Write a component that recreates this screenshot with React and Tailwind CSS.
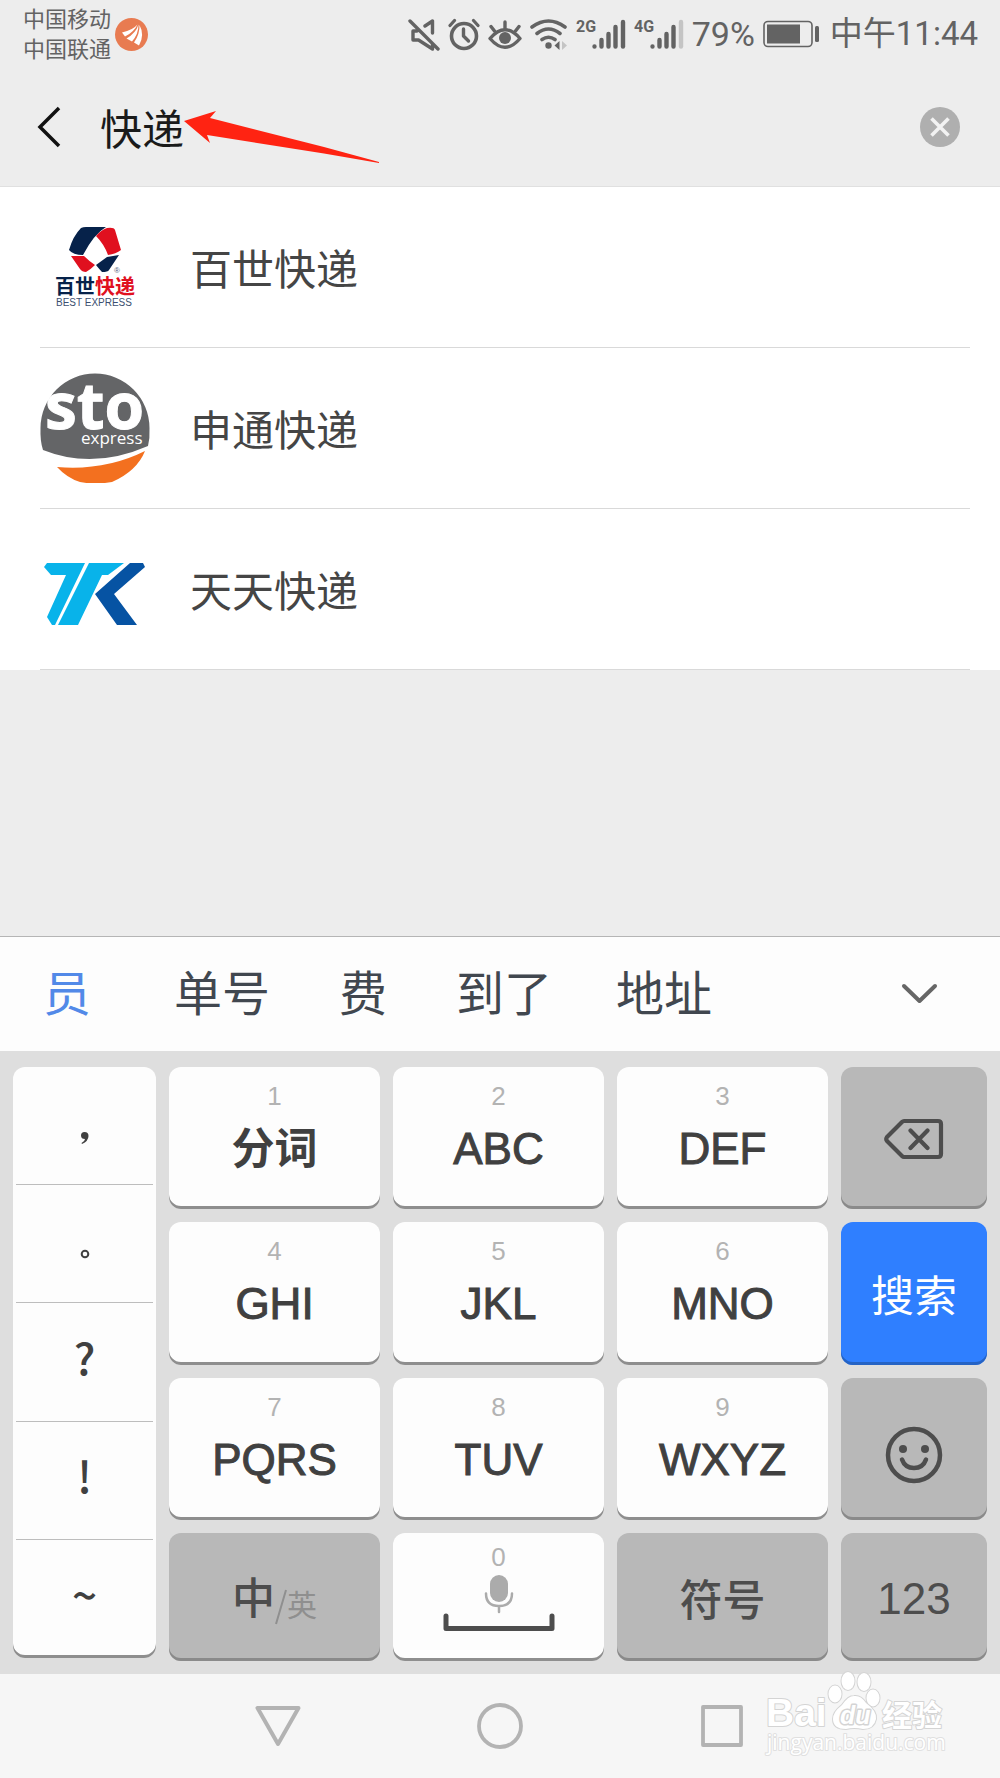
import React, { useState } from "react";

const CJK = "font-['Noto_Sans_CJK_SC',sans-serif]";

function MuteIcon() {
  return (
    <svg width="32" height="34" viewBox="0 0 32 34" fill="none" stroke="#636363" strokeWidth="3.400" strokeLinecap="round" strokeLinejoin="round" aria-label="静音">
      <path d="M2 4 30 32M17 9 24.500 4v12M9 14H5v9h5.500l14 9v-5" />
    </svg>
  );
}

function AlarmIcon() {
  return (
    <svg width="32" height="34" viewBox="0 0 32 34" fill="none" stroke="#636363" strokeLinecap="round" aria-label="闹钟">
      <circle cx="16" cy="19" r="12.500" strokeWidth="3.600" />
      <path d="M15.500 12v7l5 5" strokeWidth="3.400" strokeLinejoin="round" />
      <path d="M2 8.500 6.500 3.500M30 8.500 25.500 3.500" strokeWidth="3.200" />
    </svg>
  );
}

function EyeIcon() {
  return (
    <svg width="34" height="34" viewBox="0 0 34 34" fill="none" stroke="#636363" strokeWidth="3.400" strokeLinecap="round" aria-label="护眼">
      <path d="M2 21.500Q17 4 32 21.500Q17 39 2 21.500Z" strokeLinejoin="round" />
      <circle cx="17" cy="21" r="6" fill="#636363" stroke="none" />
      <path d="M17 5v6M3 9.500l3.500 4.500M31 9.500l-3.500 4.500" />
    </svg>
  );
}

function WifiIcon() {
  return (
    <svg width="38" height="34" viewBox="0 0 38 34" fill="none" stroke="#636363" strokeWidth="3.600" strokeLinecap="round" aria-label="无线网络">
      <path d="M2 10Q18.500-2 35 10M7 16.500Q18.500 7.500 30 16.500M12 22.500Q18.500 18 25 22.500" />
      <circle cx="18.500" cy="28.500" r="3.200" fill="#636363" stroke="none" />
      <path d="M29.500 24v9l-5-4.500Z" fill="#636363" stroke="none" />
      <path d="M32 24v9l5-4.500Z" fill="#c4c4c4" stroke="none" />
    </svg>
  );
}

function Signal({ label, weak }) {
  return (
    <svg width="50" height="34" viewBox="0 0 50 34" aria-label={label + " 信号"}>
      <text x="0" y="15" fill="#636363" className="font-['Roboto',sans-serif] text-[16px] font-bold">{label}</text>
      <g stroke="#636363" strokeWidth="4.400" strokeLinecap="round">
        <path d="M18.500 29.500v.100M25.500 23V29.500M32.500 17V29.500M39.500 10V29.500" />
        <path d="M47 5V29.500" stroke={weak ? "#c4c4c4" : "#636363"} />
      </g>
    </svg>
  );
}

function StatusBar() {
  return (
    <div className="flex items-center justify-between pt-[2px] pr-[22px] pb-[2px] pl-[23px] text-[#636363]">
      <div className="flex items-center gap-1">
        <div className={CJK + " text-[22px] leading-[30px]"}>
          <div>中国移动</div>
          <div>中国联通</div>
        </div>
        <svg className="mt-1" width="33" height="33" viewBox="0 0 33 33" aria-hidden="true">
          <circle cx="16.500" cy="16.500" r="16.500" fill="#e87b51" />
          <path d="M7 14.500Q18 12 22.500 6.500Q19 14 10 18.500ZM11.500 20.500Q21 15 23.500 6.500Q23.500 16 17 23.500ZM19 24.500Q25 16 24.500 7Q30 17 24 27.500Z" fill="#fff" />
        </svg>
      </div>
      <div className="flex items-center gap-2 pt-1">
        <MuteIcon />
        <AlarmIcon />
        <EyeIcon />
        <WifiIcon />
        <Signal label="2G" />
        <Signal label="4G" weak />
        <span className="font-['Roboto',sans-serif] text-[34px] leading-[40px]">79%</span>
        <svg width="57" height="28" viewBox="0 0 57 28" aria-label="电量">
          <rect x="1" y="1.500" width="48" height="25" rx="4" fill="none" stroke="#636363" strokeWidth="1.600" />
          <rect x="4" y="4.500" width="33" height="19" fill="#636363" />
          <rect x="52" y="6" width="4" height="16" rx="1.500" fill="#636363" />
        </svg>
        <span className="ml-[2px] font-['Roboto','Noto_Sans_CJK_SC',sans-serif] text-[33px] leading-[40px]">中午11:44</span>
      </div>
    </div>
  );
}

function SearchHeader() {
  const [query, setQuery] = useState("快递");
  return (
    <form className="relative flex h-[120px] items-center border-b border-[#e0e0e0] pr-10 pl-9" onSubmit={(e) => e.preventDefault()}>
      <button type="button" aria-label="返回" className="shrink-0">
        <svg width="26" height="44" viewBox="0 0 26 44" fill="none" stroke="#111" strokeWidth="3.500">
          <path d="M23 3 4 22 23 41" />
        </svg>
      </button>
      <input
        aria-label="搜索"
        value={query}
        onChange={(e) => setQuery(e.target.value)}
        className={CJK + " ml-[38px] h-16 min-w-0 flex-1 bg-transparent text-[42px] leading-[60px] text-[#1a1a1a] outline-none"}
      />
      <button type="button" aria-label="清除" onClick={() => setQuery("")} className="shrink-0">
        <svg width="40" height="40" viewBox="0 0 40 40">
          <circle cx="20" cy="20" r="20" fill="#afafaf" />
          <path d="M11.500 11.500 28.500 28.500M28.500 11.500 11.500 28.500" stroke="#f2f2f2" strokeWidth="3.600" />
        </svg>
      </button>
      <svg className="pointer-events-none absolute top-11 left-[184px]" width="196" height="54" viewBox="0 0 196 54" aria-hidden="true">
        <path d="M0 10 32 0 26 7L140 36 195 51V52L140 42.500 23 24L26 32Z" fill="#ff2312" />
      </svg>
    </form>
  );
}

function BestLogo() {
  return (
    <svg width="110" height="110" viewBox="0 0 110 110" aria-label="百世快递">
      <path d="M41 16Q43 15 46 15H66Q54 22 43 43Q33 43 29 38Q33 24 41 16Z" fill="#06224a" />
      <path d="M56 24Q61 18 67 16Q74 15 75 18L81 38Q76 42 68 43Q64 32 56 24Z" fill="#e0101f" />
      <path d="M31 44H44Q49 49 55 53Q50 58 46 60Q42 60 40 57Z" fill="#e0101f" />
      <path d="M79 43Q73 44 67 45L56 53Q60 58 62 60Q68 60 69 58Z" fill="#06224a" />
      <text x="74" y="61" fill="#55607c" className="font-['Liberation_Sans',sans-serif] text-[8px]">®</text>
      <text x="15" y="82" className={CJK + " text-[20px] font-bold"}>
        <tspan fill="#06224a">百世</tspan>
        <tspan fill="#e0101f">快递</tspan>
      </text>
      <text x="16" y="94" fill="#3c4f70" className="font-['Liberation_Sans',sans-serif] text-[10px]">BEST EXPRESS</text>
    </svg>
  );
}

function StoLogo() {
  return (
    <svg width="110" height="110" viewBox="0 0 110 110" aria-label="申通快递">
      <path d="M3 77Q0 68 0.500 55A54.500 54.500 0 0 1 109.500 55Q110 65 108 73Q53 97 3 77Z" fill="#646567" />
      <path d="M17 94Q65 98 105 78Q97 98 72 109Q55 112 40 109Q27 105 17 94Z" fill="#f3701f" />
      <text x="5" y="56" fill="#fff" stroke="#fff" strokeWidth="1" className="font-['Open_Sans',sans-serif] text-[64px] font-bold">sto</text>
      <text x="41" y="71" fill="#fff" className="font-['Open_Sans',sans-serif] text-[17px] font-medium">express</text>
    </svg>
  );
}

function TtkLogo() {
  return (
    <svg width="110" height="110" viewBox="0 0 110 110" aria-label="天天快递">
      <path d="M7 29H45L15 91H12L7 83 26 41H11L4 33Z" fill="#08b3ea" />
      <path d="M49 29H84L68 41H62L38 91H18Z" fill="#08b3ea" />
      <path d="M90 29H103L105 33 74 60 97 91H77L55 60Z" fill="#0653a3" />
    </svg>
  );
}

const COMPANIES = [
  { name: "百世快递", Logo: BestLogo },
  { name: "申通快递", Logo: StoLogo },
  { name: "天天快递", Logo: TtkLogo },
];

function Results() {
  return (
    <ul className="bg-white pr-[30px] pl-10">
      {COMPANIES.map(({ name, Logo }) => (
        <li key={name} className="border-b border-[#d9d9d9]">
          <button type="button" className="flex h-40 w-full items-center gap-10 text-left">
            <Logo />
            <span className={CJK + " text-[42px] leading-[60px] text-[#454545]"}>{name}</span>
          </button>
        </li>
      ))}
    </ul>
  );
}

function Candidates() {
  return (
    <div className="flex h-[115px] items-center justify-between border-t border-[#b5b5b5] bg-[#fdfdfd] pr-[62px]">
      <div className={CJK + " flex pb-2 text-[48px] leading-[64px] text-[#41474f]"}>
        <button type="button" className="w-[142px] pr-2 text-[#5289e8]">员</button>
        {["单号", "费", "到了", "地址"].map((w) => (
          <button type="button" key={w} className="min-w-[122px] px-8">{w}</button>
        ))}
      </div>
      <button type="button" aria-label="展开">
        <svg width="37" height="22" viewBox="0 0 37 22" fill="none" stroke="#666" strokeWidth="4" strokeLinecap="round" strokeLinejoin="round">
          <path d="M3 3 18.500 18 34 3" />
        </svg>
      </button>
    </div>
  );
}

function LetterKey({ digit, label, cjk }) {
  return (
    <button type="button" className="flex flex-col items-center rounded-xl bg-[#fdfdfd] pt-3 text-[#404040] shadow-[inset_0_-3px_0_#8e8e8e]">
      <span className="font-['Liberation_Sans',sans-serif] text-[26px] leading-[34px] text-[#b3b3b3]">{digit}</span>
      {cjk ? (
        <span className={CJK + " mt-[2px] text-[43px] leading-[60px] font-bold"}>{label}</span>
      ) : (
        <span className="mt-1 font-['Liberation_Sans',sans-serif] text-[44px] leading-[64px] [-webkit-text-stroke:1px_#404040]">{label}</span>
      )}
    </button>
  );
}

function GreyKey({ children, label }) {
  return (
    <button type="button" aria-label={label} className="flex items-center justify-center rounded-xl bg-[#b8b8b8] text-[#4d4d4d] shadow-[inset_0_-3px_0_#8a8a8a]">
      {children}
    </button>
  );
}

function Comma() {
  return (
    <svg width="10" height="14" viewBox="0 0 10 14" aria-label="逗号">
      <path d="M1 4.500Q1 1 4.500 1Q8.500 1 8.500 5Q8.500 10 2 13L1.500 12Q5 10 5 8Q1 8 1 4.500Z" fill="#404040" />
    </svg>
  );
}

function FullStop() {
  return (
    <svg width="10" height="10" viewBox="0 0 10 10" aria-label="句号">
      <circle cx="5" cy="5" r="3.300" fill="none" stroke="#404040" strokeWidth="2" />
    </svg>
  );
}

const PUNCTUATION = [
  { id: "comma", mark: <Comma />, pad: "pt-6" },
  { id: "stop", mark: <FullStop />, pad: "pt-5" },
  { id: "question", mark: "?", pad: "pb-3" },
  { id: "exclamation", mark: "!", pad: "pb-3" },
  { id: "tilde", mark: "~", pad: "pb-3" },
];

function Keyboard() {
  return (
    <div className="grid grid-cols-[143fr_211fr_211fr_211fr_146fr] grid-rows-[142px_143px_142px_128px] gap-[13px] bg-[#dedede] px-[13px] pt-4 pb-[13px]">
      <div className="row-span-4 mb-[3px] grid grid-rows-5 divide-y divide-[#bdbdbd] rounded-xl bg-[#fdfdfd] px-[3px] shadow-[inset_0_-3px_0_#8e8e8e]">
        {PUNCTUATION.map(({ id, mark, pad }) => (
          <button type="button" key={id} className={CJK + " flex min-h-0 items-center justify-center text-[44px] leading-[60px] font-medium text-[#404040] " + pad}>
            {mark}
          </button>
        ))}
      </div>

      <LetterKey digit="1" label="分词" cjk />
      <LetterKey digit="2" label="ABC" />
      <LetterKey digit="3" label="DEF" />
      <GreyKey label="删除">
        <svg className="mt-[2px]" width="60" height="42" viewBox="0 0 60 42" fill="none" stroke="#4d4d4d" strokeWidth="4.200" strokeLinecap="round" strokeLinejoin="round">
          <path d="M20 3H54Q57 3 57 6V36Q57 39 54 39H20Q19 39 18 38L3 23Q1.500 21 3 19L18 4Q19 3 20 3ZM26.500 12.500 43.500 30M43.500 12.500 26.500 30" />
        </svg>
      </GreyKey>

      <LetterKey digit="4" label="GHI" />
      <LetterKey digit="5" label="JKL" />
      <LetterKey digit="6" label="MNO" />
      <button type="submit" className={CJK + " rounded-xl bg-[#2f7fff] pb-[2px] text-[43px] leading-[60px] text-white shadow-[inset_0_-3px_0_#2563c4]"}>搜索</button>

      <LetterKey digit="7" label="PQRS" />
      <LetterKey digit="8" label="TUV" />
      <LetterKey digit="9" label="WXYZ" />
      <GreyKey label="表情">
        <svg className="mt-3" width="58" height="58" viewBox="0 0 58 58" fill="none" stroke="#4d4d4d" strokeWidth="4.500" strokeLinecap="round">
          <circle cx="29" cy="29" r="26" />
          <path d="M17 33.500Q20 42 29 42Q38 42 41 33.500" />
          <circle cx="18" cy="23" r="4" fill="#4d4d4d" stroke="none" />
          <circle cx="40" cy="23" r="4" fill="#4d4d4d" stroke="none" />
        </svg>
      </GreyKey>

      <GreyKey label="中/英">
        <span className={CJK + " flex items-end pb-1 text-[#8f8f8f]"}>
          <span className="text-[43px] leading-[60px] font-medium text-[#4d4d4d]">中</span>
          <svg width="12" height="36" viewBox="0 0 12 36" fill="none" stroke="#8f8f8f" strokeWidth="2">
            <path d="M11 1 1 35" />
          </svg>
          <span className="text-[30px] leading-[44px]">英</span>
        </span>
      </GreyKey>
      <button type="button" aria-label="空格" className="flex flex-col items-center rounded-xl bg-[#fdfdfd] pt-2 shadow-[inset_0_-3px_0_#8e8e8e]">
        <span className="font-['Liberation_Sans',sans-serif] text-[26px] leading-[32px] text-[#b3b3b3]">0</span>
        <svg width="112" height="58" viewBox="0 0 112 58" fill="none" strokeLinecap="round" strokeLinejoin="round">
          <rect x="47" y="2" width="18" height="27" rx="9" fill="#ababab" />
          <path d="M43 20.500Q43 33 56 33Q69 33 69 20.500M56 33V39" stroke="#ababab" strokeWidth="2.500" />
          <path d="M3 43V55.500H109V43" stroke="#4d4d4d" strokeWidth="5" />
        </svg>
      </button>
      <GreyKey>
        <span className={CJK + " text-[43px] leading-[60px] font-medium"}>符号</span>
      </GreyKey>
      <GreyKey>
        <span className="pt-1 font-['Liberation_Sans',sans-serif] text-[44px] leading-[60px]">123</span>
      </GreyKey>
    </div>
  );
}

function Watermark() {
  return (
    <svg className="pointer-events-none absolute right-[50px] bottom-5" width="186" height="88" viewBox="0 0 186 88" aria-label="Baidu 经验">
      <g fill="#fff" stroke="#d4d4d4" strokeWidth="2" paintOrder="stroke" strokeLinejoin="round">
        <text x="2" y="56" className="font-['Liberation_Sans',sans-serif] text-[39px] font-bold">Bai</text>
        <ellipse cx="71" cy="24" rx="6.500" ry="8.500" />
        <ellipse cx="84" cy="11" rx="6.500" ry="9" />
        <ellipse cx="100" cy="12" rx="6.500" ry="9" />
        <ellipse cx="109" cy="28" rx="6.500" ry="8.500" />
        <path d="M90 26Q97 25 102 33Q113 41 112 49Q110 59 99 59Q90 57 82 59Q69 59 69 49Q69 42 78 35Q84 26 90 26Z" />
        <text x="76" y="54" strokeWidth="3" className="font-['Liberation_Sans',sans-serif] text-[25px] font-bold italic">du</text>
        <text x="118" y="56" className={CJK + " text-[30px] font-bold"}>经验</text>
        <text x="3" y="80" stroke="#e0e0e0" className="font-['Open_Sans',sans-serif] text-[21px]">jingyan.baidu.com</text>
      </g>
    </svg>
  );
}

function NavBar() {
  return (
    <nav className="relative flex h-[104px] items-center justify-center gap-[176px] bg-[#f6f6f6]">
      <button type="button" aria-label="返回">
        <svg width="46" height="46" viewBox="0 0 46 46" fill="none" stroke="#b3b3b3" strokeWidth="4" strokeLinejoin="round">
          <path d="M2.500 5H43.500L23 41Z" />
        </svg>
      </button>
      <button type="button" aria-label="主页">
        <svg width="46" height="46" viewBox="0 0 46 46" fill="none" stroke="#b3b3b3" strokeWidth="3.800">
          <circle cx="23" cy="23" r="21" />
        </svg>
      </button>
      <button type="button" aria-label="最近任务">
        <svg width="46" height="46" viewBox="0 0 46 46" fill="none" stroke="#b3b3b3" strokeWidth="3.800" strokeLinejoin="round">
          <rect x="4" y="4" width="38" height="38" />
        </svg>
      </button>
      <Watermark />
    </nav>
  );
}

export default function App() {
  return (
    <div className="flex min-h-screen flex-col bg-[#ededed]">
      <header className="flex flex-col gap-[3px]">
        <StatusBar />
        <SearchHeader />
      </header>
      <main className="flex-1">
        <Results />
      </main>
      <Candidates />
      <Keyboard />
      <NavBar />
    </div>
  );
}
